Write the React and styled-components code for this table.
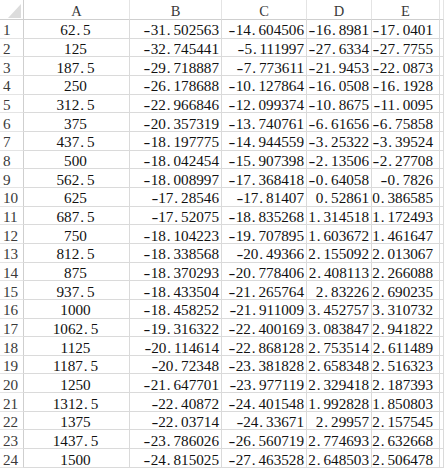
import React from "react";
import styled, { createGlobalStyle } from "styled-components";

const Global = createGlobalStyle`
  html, body { margin: 0; padding: 0; background: #fff; }
  body { overflow: hidden; }
`;

const rows = [
  ["62.5", "-31.502563", "-14.604506", "-16.8981", "-17.0401"],
  ["125", "-32.745441", "-5.111997", "-27.6334", "-27.7755"],
  ["187.5", "-29.718887", "-7.773611", "-21.9453", "-22.0873"],
  ["250", "-26.178688", "-10.127864", "-16.0508", "-16.1928"],
  ["312.5", "-22.966846", "-12.099374", "-10.8675", "-11.0095"],
  ["375", "-20.357319", "-13.740761", "-6.61656", "-6.75858"],
  ["437.5", "-18.197775", "-14.944559", "-3.25322", "-3.39524"],
  ["500", "-18.042454", "-15.907398", "-2.13506", "-2.27708"],
  ["562.5", "-18.008997", "-17.368418", "-0.64058", "-0.7826"],
  ["625", "-17.28546", "-17.81407", "0.52861", "0.386585"],
  ["687.5", "-17.52075", "-18.835268", "1.314518", "1.172493"],
  ["750", "-18.104223", "-19.707895", "1.603672", "1.461647"],
  ["812.5", "-18.338568", "-20.49366", "2.155092", "2.013067"],
  ["875", "-18.370293", "-20.778406", "2.408113", "2.266088"],
  ["937.5", "-18.433504", "-21.265764", "2.83226", "2.690235"],
  ["1000", "-18.458252", "-21.911009", "3.452757", "3.310732"],
  ["1062.5", "-19.316322", "-22.400169", "3.083847", "2.941822"],
  ["1125", "-20.114614", "-22.868128", "2.753514", "2.611489"],
  ["1187.5", "-20.72348", "-23.381828", "2.658348", "2.516323"],
  ["1250", "-21.647701", "-23.977119", "2.329418", "2.187393"],
  ["1312.5", "-22.40872", "-24.401548", "1.992828", "1.850803"],
  ["1375", "-22.03714", "-24.33671", "2.29957", "2.157545"],
  ["1437.5", "-23.786026", "-26.560719", "2.774693", "2.632668"],
  ["1500", "-24.815025", "-27.463528", "2.648503", "2.506478"],
];

const Sheet = styled.div`
  display: grid;
  grid-template-columns: 24px 106px 92px 85px 65px 68px 1fr;
  grid-template-rows: 20px;
  grid-auto-rows: 18.67px;
  width: 444px;
  font-family: "Liberation Serif", "DejaVu Serif", serif;
  font-size: 15.2px;
  line-height: 1;
  color: #111;
`;

const Corner = styled.div`
  display: flex;
  align-items: flex-end;
  justify-content: flex-end;
  padding: 0 2px 1px 0;
  border-right: 1px solid #cfcfcf;
  border-bottom: 1px solid #cfcfcf;
`;

const ColHead = styled.div`
  display: flex;
  align-items: flex-end;
  justify-content: center;
  padding-bottom: 1px;
  color: #3a3a3a;
  font-size: 14.5px;
  border-right: 1px solid #e4e4e4;
  border-bottom: 1px solid #cfcfcf;
`;

const RowHead = styled.div`
  display: flex;
  align-items: flex-end;
  padding: 0 0 0 3px;
  color: #3a3a3a;
  border-right: 1px solid #cfcfcf;
  border-bottom: 1px solid #e4e4e4;
`;

const Cell = styled.div`
  display: flex;
  align-items: flex-end;
  justify-content: ${(p) => (p.$center ? "center" : "flex-end")};
  padding: 0 ${(p) => p.$pr ?? 2}px 0 0;
  white-space: nowrap;
  overflow: hidden;
  border-right: 1px solid #dadada;
  border-bottom: 1px solid #dadada;
`;

const Dot = styled.span`
  display: inline-block;
  width: 0.5em;
  padding-left: 0.06em;
  box-sizing: border-box;
`;

const Minus = styled.span`
  display: inline-block;
  width: 0.5em;
  text-align: center;
  transform: scaleX(1.35);
`;

function Num({ v }) {
  return (
    <span>
      {v.split("").map((c, i) =>
        c === "." ? (
          <Dot key={i}>.</Dot>
        ) : c === "-" ? (
          <Minus key={i}>-</Minus>
        ) : (
          c
        )
      )}
    </span>
  );
}

const letters = ["A", "B", "C", "D", "E", ""];

export default function App() {
  return (
    <>
      <Global />
      <Sheet>
        <Corner>
          <svg width="13" height="14" viewBox="0 0 13 14">
            <polygon points="13,0 13,14 0,14" fill="#dcdcdc" />
          </svg>
        </Corner>
        {letters.map((l, i) => (
          <ColHead key={i}>{l}</ColHead>
        ))}
        {rows.map((r, i) => (
          <React.Fragment key={i}>
            <RowHead>{i + 1}</RowHead>
            <Cell $center>
              <Num v={r[0]} />
            </Cell>
            <Cell>
              <Num v={r[1]} />
            </Cell>
            <Cell>
              <Num v={r[2]} />
            </Cell>
            <Cell>
              <Num v={r[3]} />
            </Cell>
            <Cell $pr={6}>
              <Num v={r[4]} />
            </Cell>
            <Cell />
          </React.Fragment>
        ))}
      </Sheet>
    </>
  );
}
